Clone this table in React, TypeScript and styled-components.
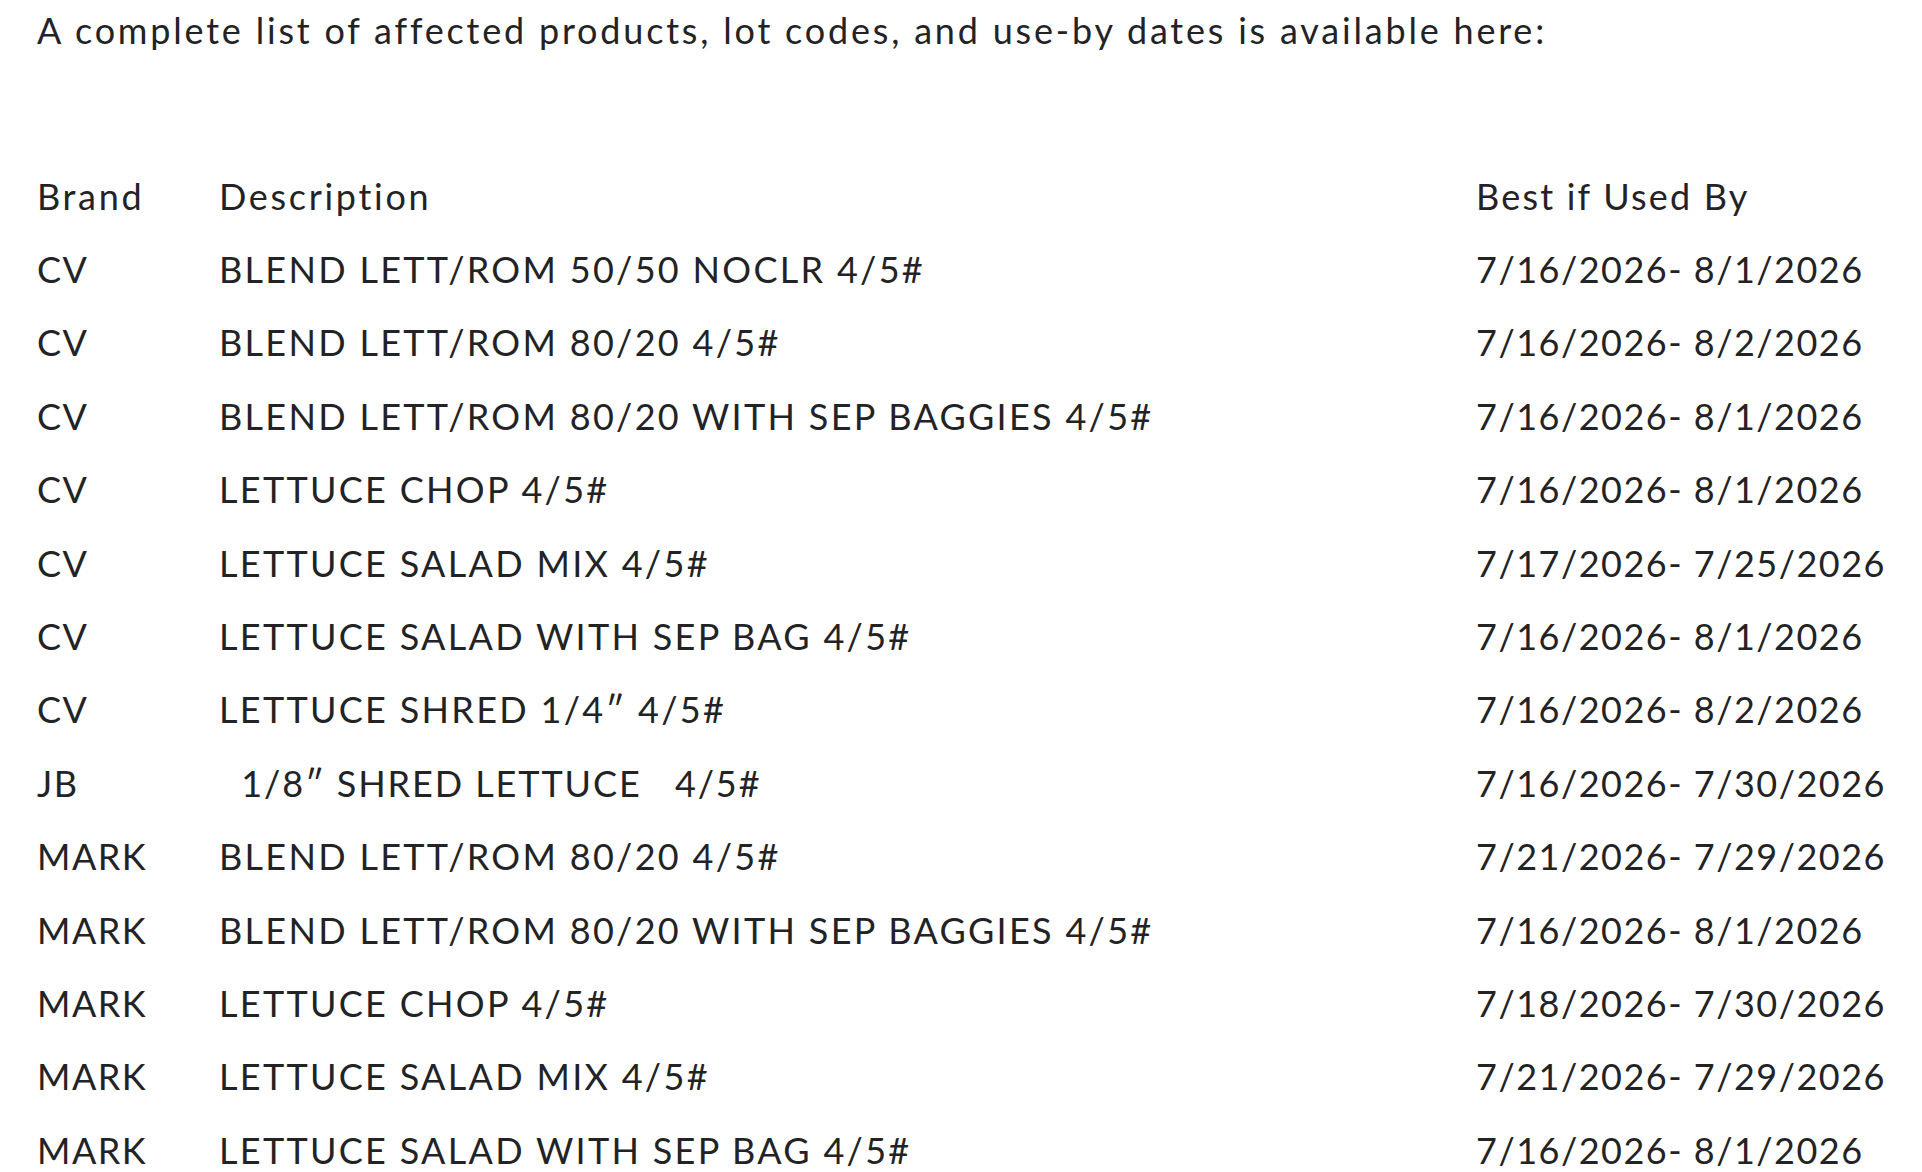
import React from 'react'
import styled, { createGlobalStyle } from 'styled-components'

interface Item {
  brand: string
  description: string
  date: string
}

const items: Item[] = [
  { brand: 'CV', description: 'BLEND LETT/ROM 50/50 NOCLR 4/5#', date: '7/16/2026- 8/1/2026' },
  { brand: 'CV', description: 'BLEND LETT/ROM 80/20 4/5#', date: '7/16/2026- 8/2/2026' },
  { brand: 'CV', description: 'BLEND LETT/ROM 80/20 WITH SEP BAGGIES 4/5#', date: '7/16/2026- 8/1/2026' },
  { brand: 'CV', description: 'LETTUCE CHOP 4/5#', date: '7/16/2026- 8/1/2026' },
  { brand: 'CV', description: 'LETTUCE SALAD MIX 4/5#', date: '7/17/2026- 7/25/2026' },
  { brand: 'CV', description: 'LETTUCE SALAD WITH SEP BAG 4/5#', date: '7/16/2026- 8/1/2026' },
  { brand: 'CV', description: 'LETTUCE SHRED 1/4″ 4/5#', date: '7/16/2026- 8/2/2026' },
  { brand: 'JB', description: '  1/8″ SHRED LETTUCE   4/5#', date: '7/16/2026- 7/30/2026' },
  { brand: 'MARK', description: 'BLEND LETT/ROM 80/20 4/5#', date: '7/21/2026- 7/29/2026' },
  { brand: 'MARK', description: 'BLEND LETT/ROM 80/20 WITH SEP BAGGIES 4/5#', date: '7/16/2026- 8/1/2026' },
  { brand: 'MARK', description: 'LETTUCE CHOP 4/5#', date: '7/18/2026- 7/30/2026' },
  { brand: 'MARK', description: 'LETTUCE SALAD MIX 4/5#', date: '7/21/2026- 7/29/2026' },
  { brand: 'MARK', description: 'LETTUCE SALAD WITH SEP BAG 4/5#', date: '7/16/2026- 8/1/2026' },
]

const GlobalStyle = createGlobalStyle`
  body {
    margin: 0;
    background: #ffffff;
    font-family: Lato, 'Liberation Sans', sans-serif;
    color: #232326;
  }
`

export default function App() {
  return (
    <>
      <GlobalStyle />
      <Page>
        <Intro>A complete list of affected products, lot codes, and use-by dates is available here:</Intro>
        <Table>
          <thead>
            <tr>
              <HeadCell>Brand</HeadCell>
              <HeadCell>Description</HeadCell>
              <HeadCell $spacing={2.2}>Best if Used By</HeadCell>
            </tr>
          </thead>
          <tbody>
            {items.map((item, i) => (
              <tr key={i}>
                <Cell $spacing={1.5}>{item.brand}</Cell>
                <Cell $spacing={item.description.startsWith(' ') ? 1.9 : 2.3}>{item.description}</Cell>
                <Cell $spacing={1.5}>{item.date}</Cell>
              </tr>
            ))}
          </tbody>
        </Table>
      </Page>
    </>
  )
}

const Page = styled.div`
  padding: 5px 37px 0;
  height: 1172px;
  overflow: hidden;
  box-sizing: border-box;
`

const Intro = styled.p`
  margin: 0;
  font-size: 36px;
  line-height: 50px;
  letter-spacing: 2.8px;
`

const Table = styled.table`
  margin-top: 104px;
  border-collapse: collapse;
  width: 1860px;
  table-layout: fixed;

  th:nth-child(1),
  td:nth-child(1) {
    width: 182px;
  }
  th:nth-child(3),
  td:nth-child(3) {
    width: 421px;
  }
`

const HeadCell = styled.th<{ $spacing?: number }>`
  text-align: left;
  font-weight: 400;
  font-size: 36px;
  height: 73.4px;
  padding: 0;
  letter-spacing: ${p => p.$spacing ?? 2.7}px;
`

const Cell = styled.td<{ $spacing: number }>`
  font-size: 36px;
  height: 73.4px;
  padding: 0;
  white-space: pre;
  letter-spacing: ${p => p.$spacing}px;
`
